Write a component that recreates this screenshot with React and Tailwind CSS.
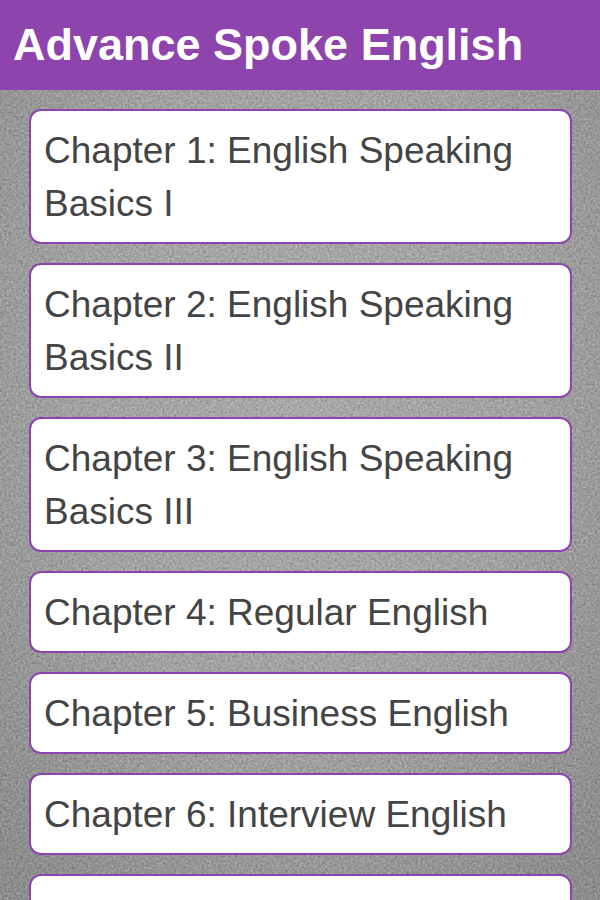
const chapters = [
  "Chapter 1: English Speaking Basics I",
  "Chapter 2: English Speaking Basics II",
  "Chapter 3: English Speaking Basics III",
  "Chapter 4: Regular English",
  "Chapter 5: Business English",
  "Chapter 6: Interview English",
  "Chapter 7",
];

// grainy grey backdrop, lighter in the middle than at the edges
const GrainBackground = () => {
  return (
    <svg className="absolute inset-0 w-full h-full" aria-hidden="true">
      <defs>
        <radialGradient id="shade" cx="50%" cy="42%" r="72%">
          <stop offset="0%" stopColor="#b2b2b2" />
          <stop offset="55%" stopColor="#a8a8a8" />
          <stop offset="100%" stopColor="#8c8c8c" />
        </radialGradient>
        <filter id="grain" x="0%" y="0%" width="100%" height="100%" colorInterpolationFilters="sRGB">
          <feTurbulence type="fractalNoise" baseFrequency="0.43" numOctaves="2" seed="4" />
          <feColorMatrix
            type="matrix"
            values="0.8 0.8 0 0 -0.24
                    0.8 0.8 0 0 -0.24
                    0.8 0.8 0 0 -0.24
                    0 0 0 0 1"
          />
        </filter>
      </defs>
      <rect width="100%" height="100%" fill="url(#shade)" />
      <rect width="100%" height="100%" filter="url(#grain)" opacity="0.25" />
    </svg>
  );
}

const ChapterLink = ({ title }) => {
  return (
    <li>
      <a
        href="#"
        className="block rounded-xl border-2 border-[#8e44ad] bg-white px-[13px] pt-[13px] pb-3 text-[37px] leading-[53px] text-[#444444]"
      >
        {title}
      </a>
    </li>
  );
}

const App = () => {
  return (
    <div className="relative flex h-screen flex-col font-['Liberation_Sans',Arial,sans-serif]">
      <GrainBackground />
      <header className="relative bg-[#8e44ad] px-[13px] py-4">
        <h1 className="text-[45px] leading-[58px] font-bold text-white">Advance Spoke English</h1>
      </header>
      <main className="relative min-h-0 flex-1 overflow-y-auto [scrollbar-width:none]">
        <ul className="flex flex-col gap-[19px] py-[19px] pr-7 pl-[29px]">
          {chapters.map((title) => (
            <ChapterLink key={title} title={title} />
          ))}
        </ul>
      </main>
    </div>
  );
}

export default App;
